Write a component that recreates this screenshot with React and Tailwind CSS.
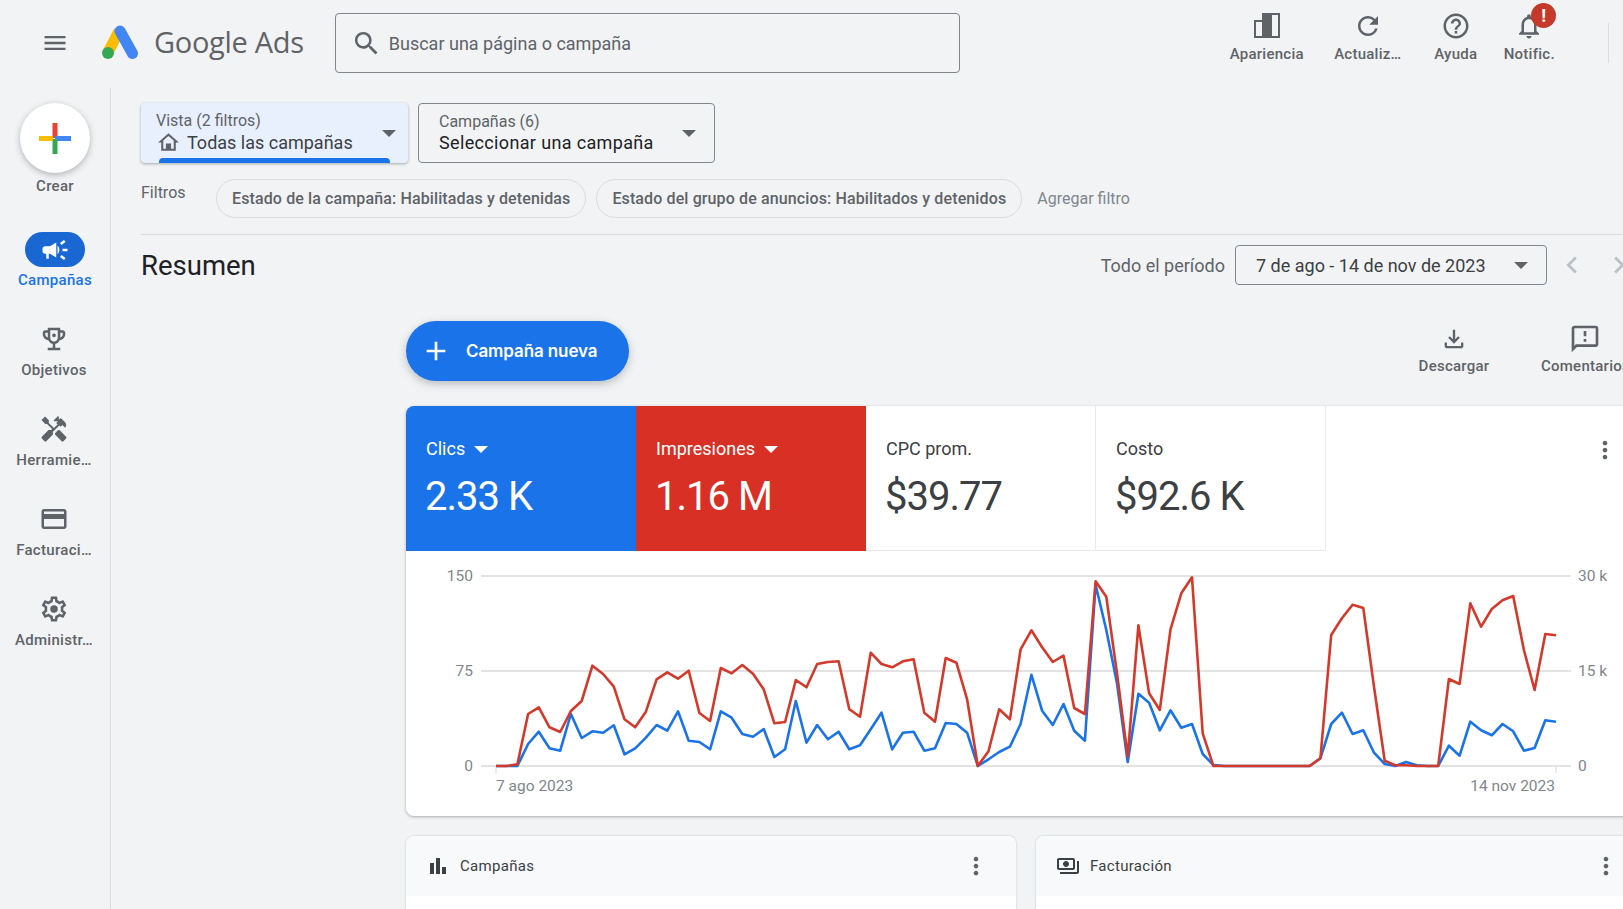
import React from 'react';

const MD = {
  menu: 'M3 18h18v-2H3v2zm0-5h18v-2H3v2zm0-7v2h18V6H3z',
  search: 'M15.5 14h-.79l-.28-.27A6.471 6.471 0 0 0 16 9.5 6.5 6.5 0 1 0 9.5 16c1.61 0 3.09-.59 4.23-1.57l.27.28v.79l5 4.99L20.49 19l-4.99-5zm-6 0C7.01 14 5 11.99 5 9.5S7.01 5 9.5 5 14 7.01 14 9.5 11.99 14 9.5 14z',
  refresh: 'M17.65 6.35A7.958 7.958 0 0 0 12 4c-4.42 0-7.99 3.58-7.99 8s3.57 8 7.99 8c3.73 0 6.84-2.55 7.73-6h-2.08A5.99 5.99 0 0 1 12 18c-3.31 0-6-2.69-6-6s2.69-6 6-6c1.66 0 3.14.69 4.22 1.78L13 11h7V4l-2.35 2.35z',
  help: 'M11 18h2v-2h-2v2zm1-16C6.48 2 2 6.48 2 12s4.48 10 10 10 10-4.48 10-10S17.52 2 12 2zm0 18c-4.41 0-8-3.59-8-8s3.59-8 8-8 8 3.59 8 8-3.59 8-8 8zm0-14c-2.21 0-4 1.79-4 4h2c0-1.1.9-2 2-2s2 .9 2 2c0 2-3 1.75-3 5h2c0-2.25 3-2.5 3-5 0-2.21-1.79-4-4-4z',
  bell: 'M12 22c1.1 0 2-.9 2-2h-4c0 1.1.9 2 2 2zm6-6v-5c0-3.07-1.63-5.64-4.5-6.32V4c0-.83-.67-1.5-1.5-1.5s-1.5.67-1.5 1.5v.68C7.64 5.36 6 7.92 6 11v5l-2 2v1h16v-1l-2-2zm-2 1H8v-6c0-2.48 1.51-4.5 4-4.5s4 2.02 4 4.5v6z',
  campaign: 'M18 11v2h4v-2h-4zm-2 6.61c.96.71 2.21 1.65 3.2 2.39.4-.53.8-1.07 1.2-1.6-.99-.74-2.24-1.68-3.2-2.4-.4.54-.8 1.08-1.2 1.61zM20.4 5.6c-.4-.53-.8-1.07-1.2-1.6-.99.74-2.24 1.68-3.2 2.4.4.53.8 1.07 1.2 1.6.96-.72 2.21-1.65 3.2-2.4zM4 9c-1.1 0-2 .9-2 2v2c0 1.1.9 2 2 2h1v4h2v-4h1l5 3V6L8 9H4zm11.5 3c0-1.33-.58-2.53-1.5-3.35v6.69c.92-.81 1.5-2.01 1.5-3.34z',
  trophy: 'M19 5h-2V3H7v2H5c-1.1 0-2 .9-2 2v1c0 2.55 1.92 4.63 4.39 4.94A5.01 5.01 0 0 0 11 15.9V19H7v2h10v-2h-4v-3.1a5.01 5.01 0 0 0 3.61-2.96C19.08 12.63 21 10.55 21 8V7c0-1.1-.9-2-2-2zM5 8V7h2v3.82C5.84 10.4 5 9.3 5 8zm7 6c-1.65 0-3-1.35-3-3V5h6v6c0 1.65-1.35 3-3 3zm7-6c0 1.3-.84 2.4-2 2.82V7h2v1zm-7 2.5a1.5 1.5 0 1 0 0-3 1.5 1.5 0 0 0 0 3z',
  tools: 'M21.67 18.17l-5.3-5.3h-.99l-2.54 2.54v.99l5.3 5.3c.39.39 1.02.39 1.41 0l2.12-2.12c.39-.38.39-1.02 0-1.41zM17.34 10.19l1.41-1.41 2.12 2.12c1.17-1.17 1.17-3.07 0-4.24l-3.54-3.54-1.41 1.41V2.34l-.71-.71-3.54 3.54.71.71h2.83l-1.41 1.41 1.06 1.06-2.89 2.89-4.13-4.13V5.06L4.83 2.04 2 4.87 5.03 7.9h1.41l4.13 4.13-.85.85H7.6l-5.3 5.3c-.39.39-.39 1.02 0 1.41l2.12 2.12c.39.39 1.02.39 1.41 0l5.3-5.3v-2.12l5.15-5.15 1.06 1.05z',
  card: 'M20 4H4c-1.11 0-1.99.89-1.99 2L2 18c0 1.11.89 2 2 2h16c1.11 0 2-.89 2-2V6c0-1.11-.89-2-2-2zm0 14H4v-6h16v6zm0-10H4V6h16v2z',
  gear: 'M19.43 12.98c.04-.32.07-.64.07-.98 0-.34-.03-.66-.07-.98l2.11-1.65c.19-.15.24-.42.12-.64l-2-3.46a.5.5 0 0 0-.61-.22l-2.49 1c-.52-.4-1.08-.73-1.69-.98l-.38-2.65A.488.488 0 0 0 14 2h-4c-.25 0-.46.18-.49.42l-.38 2.65c-.61.25-1.17.59-1.69.98l-2.49-1a.566.566 0 0 0-.18-.03c-.17 0-.34.09-.43.25l-2 3.46c-.13.22-.07.49.12.64l2.11 1.65c-.04.32-.07.65-.07.98 0 .33.03.66.07.98l-2.11 1.65c-.19.15-.24.42-.12.64l2 3.46a.5.5 0 0 0 .61.22l2.49-1c.52.4 1.08.73 1.69.98l.38 2.65c.03.24.24.42.49.42h4c.25 0 .46-.18.49-.42l.38-2.65c.61-.25 1.17-.59 1.69-.98l2.49 1c.06.02.12.03.18.03.17 0 .34-.09.43-.25l2-3.46c.12-.22.07-.49-.12-.64l-2.11-1.65zm-1.98-1.71c.04.31.05.52.05.73 0 .21-.02.43-.05.73l-.14 1.13.89.7 1.08.84-.7 1.21-1.27-.51-1.04-.42-.9.68c-.43.32-.84.56-1.25.73l-1.06.43-.16 1.13-.2 1.35h-1.4l-.19-1.35-.16-1.13-1.06-.43c-.43-.18-.83-.41-1.23-.71l-.91-.7-1.06.43-1.27.51-.7-1.21 1.08-.84.89-.7-.14-1.13c-.03-.31-.05-.54-.05-.74s.02-.43.05-.73l.14-1.13-.89-.7-1.08-.84.7-1.21 1.27.51 1.04.42.9-.68c.43-.32.84-.56 1.25-.73l1.06-.43.16-1.13.2-1.35h1.39l.19 1.35.16 1.13 1.06.43c.43.18.83.41 1.23.71l.91.7 1.06-.43 1.27-.51.7 1.21-1.07.85-.89.7.14 1.13zM12 15a3 3 0 1 0 0-6 3 3 0 0 0 0 6z',
  download: 'M18 15v3H6v-3H4v3c0 1.1.9 2 2 2h12c1.1 0 2-.9 2-2v-3h-2zm-1-4l-1.41-1.41L13 12.17V4h-2v8.17L8.41 9.59 7 11l5 5 5-5z',
  feedback: 'M20 2H4c-1.1 0-1.99.9-1.99 2L2 22l4-4h14c1.1 0 2-.9 2-2V4c0-1.1-.9-2-2-2zm0 14H5.17L4 17.17V4h16v12zM11 12h2v2h-2zm0-6h2v4h-2z',
  home: 'M12 5.69l5 4.5V18H7v-7.81l5-4.5M12 3L2 12h3v8h14v-8h3L12 3zM9.5 13h5v5h-5z',
  bars: 'M4 9h4v11H4zM16 13h4v7h-4zM10 4h4v16h-4z',
  money: 'M19 14V6c0-1.1-.9-2-2-2H3c-1.1 0-2 .9-2 2v8c0 1.1.9 2 2 2h14c1.1 0 2-.9 2-2zm-2 0H3V6h14v8zm-7-7c-1.66 0-3 1.34-3 3s1.34 3 3 3 3-1.34 3-3-1.34-3-3-3zm13 0v11c0 1.1-.9 2-2 2H4v-2h17V7h2z',
  more: 'M12 8c1.1 0 2-.9 2-2s-.9-2-2-2-2 .9-2 2 .9 2 2 2zm0 2c-1.1 0-2 .9-2 2s.9 2 2 2 2-.9 2-2-.9-2-2-2zm0 6c-1.1 0-2 .9-2 2s.9 2 2 2 2-.9 2-2-.9-2-2-2z',
  plus: 'M19 13h-6v6h-2v-6H5v-2h6V5h2v6h6v2z',
  left: 'M15.41 7.41L14 6l-6 6 6 6 1.41-1.41L10.83 12z',
  right: 'M10 6L8.59 7.41 13.17 12l-4.58 4.59L10 18l6-6z',
};

const Icon = ({ d, className }) => (
  <svg viewBox="0 0 24 24" fill="currentColor" className={className}>
    <path fillRule="evenodd" d={d} />
  </svg>
);

const Caret = ({ color = 'border-t-[#5f6368]' }) => (
  <span className={`block w-0 h-0 border-x-[7px] border-t-[7px] border-x-transparent ${color}`} />
);

const AdsLogo = () => (
  <svg viewBox="0 0 36 34" className="w-9 h-[34px] shrink-0">
    <path d="M17 6 L5.7 28" stroke="#fbbc04" strokeWidth="11" strokeLinecap="butt" fill="none" />
    <path d="M18 6 L30.5 28.5" stroke="#4285f4" strokeWidth="11" strokeLinecap="round" fill="none" />
    <circle cx="6" cy="28" r="6" fill="#34a853" />
  </svg>
);

const AppearanceIcon = () => (
  <svg viewBox="0 0 26 26" className="w-[26px] h-[26px]">
    <path fill="#5f6368" fillRule="evenodd" d="M8 0h18v25H0V7h8V0zM2 9v14h6V9H2zm8-7v21h14V2H10z" />
    <path fill="#5f6368" d="M10 2h8v21h-8z" />
  </svg>
);

const PlusLogo = () => (
  <svg viewBox="0 0 32 31" className="w-8 h-[31px]">
    <rect x="13.5" y="0" width="5" height="15" fill="#ea4335" />
    <rect x="16" y="13" width="16" height="5" fill="#4285f4" />
    <rect x="13.5" y="16" width="5" height="15" fill="#34a853" />
    <rect x="0" y="13" width="14" height="5" fill="#fbbc04" />
  </svg>
);

const topActions = [
  { label: 'Actualiz…', d: MD.refresh, w: 'w-[100px]' },
  { label: 'Ayuda', d: MD.help, w: 'w-[76px]' },
];

const navItems = [
  { label: 'Objetivos', d: MD.trophy },
  { label: 'Herramie…', d: MD.tools },
  { label: 'Facturaci…', d: MD.card },
  { label: 'Administr…', d: MD.gear },
];

const chips = [
  'Estado de la campaña: Habilitadas y detenidas',
  'Estado del grupo de anuncios: Habilitados y detenidos',
];

const metrics = [
  { label: 'Clics', value: '2.33 K', bg: 'bg-[#1a73e8] text-white rounded-tl-lg', caret: true },
  { label: 'Impresiones', value: '1.16 M', bg: 'bg-[#d93025] text-white', caret: true },
  { label: 'CPC prom.', value: '$39.77', bg: 'bg-white text-[#3c4043] border-r border-b border-[#e8eaed]' },
  { label: 'Costo', value: '$92.6 K', bg: 'bg-white text-[#3c4043] border-r border-b border-[#e8eaed]' },
];

// values read off the reference, in 3x zoom px (y = 550 + v / 3)
const RED = [648,648,643,492,472,532,546,483,453,347,372,410,508,532,485,388,367,386,362,489,513,354,370,345,371,418,520,516,390,412,342,336,334,478,500,308,342,352,334,328,488,515,324,338,448,648,604,478,508,298,241,292,336,317,474,492,94,140,370,620,226,430,480,238,130,82,550,648,648,648,648,648,648,648,648,648,648,625,255,205,164,174,410,632,646,646,648,648,648,387,402,160,230,177,151,138,300,420,252,256];
const BLUE = [648,648,648,582,545,595,602,492,564,544,548,526,613,595,563,525,542,484,572,576,598,484,503,552,560,537,621,598,453,578,525,568,545,598,586,538,488,598,548,545,602,595,519,522,548,648,628,606,590,522,374,482,525,462,542,572,104,240,400,636,431,458,541,481,533,522,612,645,648,648,648,648,648,648,648,648,648,625,522,488,552,541,608,642,648,636,646,648,648,587,617,515,541,556,522,544,602,594,511,515];

const toPoints = (vals) =>
  vals.map((v, i) => `${(496 + (1060 / 99) * i).toFixed(1)},${(550 + v / 3).toFixed(1)}`).join(' ');

const Chart = () => (
  <svg viewBox="406 551 1240 265" className="block w-[1240px] h-[265px]" style={{ fontFamily: 'Roboto, sans-serif' }}>
    {[576, 671, 766].map((y) => (
      <line key={y} x1="481" x2="1571" y1={y} y2={y} stroke="#e3e3e3" strokeWidth="2" />
    ))}
    <line x1="496" x2="496" y1="766" y2="773" stroke="#e3e3e3" strokeWidth="1.5" />
    <line x1="1556" x2="1556" y1="766" y2="773" stroke="#e3e3e3" strokeWidth="1.5" />
    <polyline points={toPoints(BLUE)} fill="none" stroke="#1a73e8" strokeWidth="2.6" strokeLinejoin="round" />
    <polyline points={toPoints(RED)} fill="none" stroke="#d33a2c" strokeWidth="2.6" strokeLinejoin="round" />
    <g fill="#80868b" fontSize="15.5">
      <text x="473" y="581" textAnchor="end">150</text>
      <text x="473" y="676" textAnchor="end">75</text>
      <text x="473" y="771" textAnchor="end">0</text>
      <text x="1578" y="581">30 k</text>
      <text x="1578" y="676">15 k</text>
      <text x="1578" y="771">0</text>
      <text x="496" y="791">7 ago 2023</text>
      <text x="1555" y="791" textAnchor="end">14 nov 2023</text>
    </g>
  </svg>
);

const MiniCard = ({ d, title }) => (
  <div className="w-[610px] shrink-0 rounded-t-lg bg-white shadow-[0_0_2px_rgba(60,64,67,.3)] overflow-hidden">
    <div className="h-[60px] bg-[#f8f9fa] flex items-center pl-[20px] pr-[28px] gap-[10px] text-[#3c4043]">
      <Icon d={d} className="w-6 h-6 text-[#3c4043]" />
      <span className="text-[15px] tracking-[.3px]">{title}</span>
      <Icon d={MD.more} className="w-7 h-7 text-[#5f6368] ml-auto -mr-[2px]" />
    </div>
    <div className="h-[60px]" />
  </div>
);

export default function App() {
  return (
    <div className="w-[1623px] h-[909px] overflow-hidden bg-[#f1f3f5] text-[#5f6368]" style={{ fontFamily: 'Roboto, sans-serif' }}>
      {/* Top bar */}
      <header className="h-[88px] flex items-start">
        <Icon d={MD.menu} className="w-7 h-7 ml-[41px] mt-[29px] shrink-0" />
        <div className="ml-[33px] mt-[25px]"><AdsLogo /></div>
        <span className="ml-[16px] mt-[22px] text-[29px] leading-[40px] tracking-[-.3px] whitespace-nowrap" style={{ fontFamily: '"Open Sans", sans-serif' }}>Google Ads</span>
        <div className="ml-[31px] mt-[13px] w-[625px] h-[60px] border border-[#80868b] rounded flex items-center pl-[15px] gap-[7px]">
          <Icon d={MD.search} className="w-[31px] h-[31px]" />
          <span className="text-[18px] mt-[1px]">Buscar una página o campaña</span>
        </div>
        <div className="ml-[256px] flex items-start text-[15px] font-medium tracking-[.25px]">
          <div className="w-[102px] pt-[13px] flex flex-col items-center">
            <AppearanceIcon />
            <span className="mt-[5px] leading-[20px]">Apariencia</span>
          </div>
          {topActions.map((a) => (
            <div key={a.label} className={`${a.w} pt-[11px] flex flex-col items-center`}>
              <Icon d={a.d} className="w-[30px] h-[30px]" />
              <span className="mt-[3px] leading-[20px]">{a.label}</span>
            </div>
          ))}
          <div className="w-[71px] pt-[11px] flex flex-col items-center">
            <div className="relative">
              <Icon d={MD.bell} className="w-[30px] h-[30px]" />
              <span className="absolute left-[17px] top-[-8px] w-[25px] h-[25px] rounded-full bg-[#c5392a] text-white text-[18px] font-bold leading-[25px] text-center">!</span>
            </div>
            <span className="mt-[3px] leading-[20px]">Notific.</span>
          </div>
        </div>
        <div className="ml-[43px] mt-[23px] w-px h-[40px] bg-[#dadce0] shrink-0" />
      </header>

      <div className="flex h-[821px]">
        {/* Left rail */}
        <aside className="w-[111px] shrink-0 border-r border-[#dadce0] flex flex-col items-center pt-[15px] text-[15px] font-medium tracking-[.3px]">
          <div className="w-[70px] h-[70px] rounded-full bg-white shadow-[0_2px_6px_rgba(60,64,67,.35)] flex items-center justify-center">
            <PlusLogo />
          </div>
          <span className="mt-[3px] leading-[20px]">Crear</span>
          <div className="mt-[36px] h-[90px] flex flex-col items-center">
            <div className="w-[60px] h-[35px] rounded-full bg-[#1967d2] flex items-center justify-center">
              <Icon d={MD.campaign} className="w-[30px] h-[30px] text-white" />
            </div>
            <span className="mt-[3px] leading-[20px] text-[#1a73e8]">Campañas</span>
          </div>
          {navItems.map((n) => (
            <div key={n.label} className="h-[90px] flex flex-col items-center -translate-x-px">
              <div className="h-[33px] flex items-center">
                <Icon d={n.d} className="w-[30px] h-[30px]" />
              </div>
              <span className="mt-[5px] leading-[20px] whitespace-nowrap">{n.label}</span>
            </div>
          ))}
        </aside>

        {/* Main column */}
        <main className="pl-[30px] pt-[15px] flex-1 min-w-0">
          <div className="flex gap-[10px]">
            <div className="relative w-[267px] h-[60px] rounded bg-[#e8f0fe] shadow-[0_1px_3px_rgba(60,64,67,.4)] pl-[15px] pt-[8px] flex overflow-hidden">
              <div>
                <div className="text-[16px] leading-[20px]">Vista (2 filtros)</div>
                <div className="flex items-center text-[#3c4043] -mt-[1px]">
                  <Icon d={MD.home} className="w-[25px] h-[25px] text-[#5f6368] mr-[6px]" />
                  <span className="text-[18px] leading-[24px]">Todas las campañas</span>
                </div>
              </div>
              <div className="ml-auto mr-[12px] mt-[19px]"><Caret /></div>
              <span className="absolute left-[18px] bottom-0 w-[231px] h-[5px] rounded-t bg-[#1a73e8]" />
            </div>
            <div className="w-[297px] h-[60px] rounded border border-[#80868b] pl-[20px] pt-[8px] flex">
              <div>
                <div className="text-[16px] leading-[20px]">Campañas (6)</div>
                <div className="text-[18px] leading-[24px] tracking-[.35px] text-[#202124] -mt-[1px]">Seleccionar una campaña</div>
              </div>
              <div className="ml-auto mr-[18px] mt-[18px]"><Caret /></div>
            </div>
          </div>

          <div className="mt-[16px] h-[39px] flex items-start">
            <span className="w-[75px] text-[16px] leading-[28px] shrink-0">Filtros</span>
            {chips.map((c) => (
              <span key={c} className="h-[39px] mr-[10px] px-[15px] rounded-full border border-[#dadce0] flex items-center text-[16px] font-medium tracking-[.12px] whitespace-nowrap">{c}</span>
            ))}
            <span className="ml-[5px] leading-[39px] text-[16px] text-[#80868b] whitespace-nowrap">Agregar filtro</span>
          </div>

          <div className="mt-[16px] h-px bg-[#dadce0]" />

          <div className="mt-[10px] h-[40px] flex items-center">
            <h1 className="text-[27.5px] text-[#202124] mt-[1px]">Resumen</h1>
            <span className="ml-auto text-[18px]">Todo el período</span>
            <div className="ml-[10px] w-[312px] h-[40px] rounded border border-[#80868b] flex items-center pl-[20px] pr-[18px] text-[18px] text-[#3c4043]">
              <span>7 de ago - 14 de nov de 2023</span>
              <span className="ml-auto"><Caret /></span>
            </div>
            <Icon d={MD.left} className="w-[34px] h-[34px] ml-[8px] text-[#bdc1c6] shrink-0" />
            <Icon d={MD.right} className="w-[34px] h-[34px] ml-[13px] mr-[-13px] text-[#bdc1c6] shrink-0" />
          </div>

          <div className="ml-[265px]">
            <div className="mt-[36px] h-[60px] flex items-start">
              <div className="w-[223px] shrink-0 h-[60px] rounded-full bg-[#1a73e8] text-white shadow-[0_3px_8px_rgba(60,64,67,.3)] flex items-center pl-[14px] gap-[14px]">
                <Icon d={MD.plus} className="w-8 h-8" />
                <span className="text-[17px] font-semibold tracking-[-.1px] mt-[1px]" style={{ fontFamily: 'Inter, sans-serif' }}>Campaña nueva</span>
              </div>
              <div className="ml-[789px] flex text-[15px] font-medium tracking-[.25px] whitespace-nowrap">
                <div className="w-[72px] flex flex-col items-center">
                  <Icon d={MD.download} className="w-7 h-7 mt-[4px]" />
                  <span className="mt-[3px] leading-[20px]">Descargar</span>
                </div>
                <div className="ml-[51px] flex flex-col items-center">
                  <Icon d={MD.feedback} className="w-8 h-8 mt-[2px]" />
                  <span className="mt-[1px] leading-[20px]">Comentarios</span>
                </div>
              </div>
            </div>

            <section className="mt-[25px] w-[1240px] h-[410px] bg-white rounded-lg shadow-[0_1px_3px_rgba(60,64,67,.4)]">
              <div className="flex h-[145px]">
                {metrics.map((m) => (
                  <div key={m.label} className={`w-[230px] h-[145px] pl-[20px] pt-[31px] ${m.bg}`}>
                    <div className="flex items-center gap-[9px] text-[18px] leading-[24px]">
                      {m.label}
                      {m.caret && <Caret color="border-t-white" />}
                    </div>
                    <div className="mt-[11px] text-[40px] leading-[50px] tracking-[-1px] -ml-[1px]">{m.value}</div>
                  </div>
                ))}
                <Icon d={MD.more} className="w-7 h-7 ml-auto mr-[27px] mt-[30px]" />
              </div>
              <Chart />
            </section>

            <div className="mt-[20px] flex gap-[20px]">
              <MiniCard d={MD.bars} title="Campañas" />
              <MiniCard d={MD.money} title="Facturación" />
            </div>
          </div>
        </main>
      </div>
    </div>
  );
}
